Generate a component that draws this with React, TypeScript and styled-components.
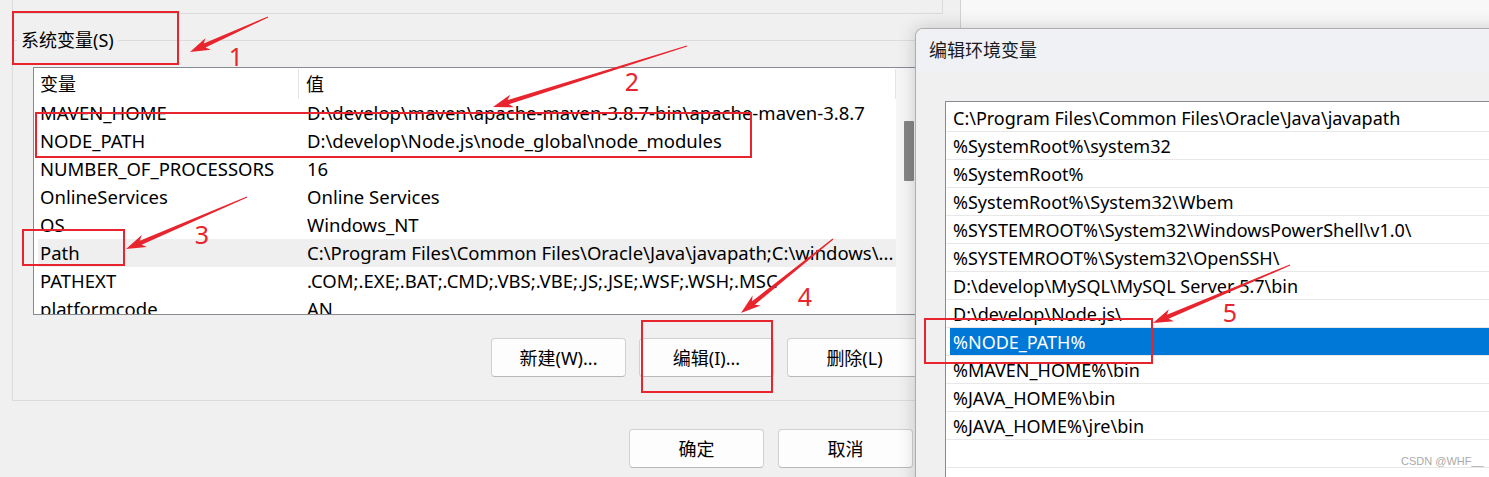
import React from "react";
import styled, { createGlobalStyle } from "styled-components";

const FONT = `"Noto Sans", "Noto Sans CJK SC", sans-serif`;
const RED = "#e8252e";

const GlobalStyle = createGlobalStyle`
  html, body { margin: 0; padding: 0; background: #f0f0f0; overflow: hidden; }
  body { font-family: ${FONT}; }
`;

const Desktop = styled.div`
  position: relative;
  display: flex;
  width: 1489px;
  height: 477px;
  overflow: hidden;
  background: #f8f8f8;
  font-family: ${FONT};
  font-size: 18px;
  color: #000;
`;

/* ---------- main (environment variables) window ---------- */
const MainWindow = styled.div`
  width: 961px;
  height: 477px;
  box-sizing: border-box;
  flex: none;
  display: flex;
  flex-direction: column;
  background: #f0f0f0;
  border-right: 1px solid #d2d2d2;
`;

const UpperGroupTail = styled.div`
  margin-left: 12px;
  width: 931px;
  height: 14px;
  box-sizing: border-box;
  border: 1px solid #dcdcdc;
  border-top: none;
`;

const GroupBox = styled.fieldset`
  margin: 14px 0 0 12px;
  width: 931px;
  box-sizing: border-box;
  border: 1px solid #dcdcdc;
  padding: 15px 20px 23px 20px;
  min-width: 0;
  display: flex;
  flex-direction: column;
`;

const GroupLegend = styled.legend`
  margin-left: -16px;
  padding: 0 4px;
  font-size: 18px;
  line-height: 24px;
`;

const ListView = styled.div`
  display: flex;
  height: 248px;
  box-sizing: border-box;
  border: 1px solid #868a91;
  background: #fff;
`;

const ListMain = styled.div`
  flex: 1;
  min-width: 0;
  display: flex;
  flex-direction: column;
  overflow: hidden;
`;

const ListHeader = styled.div`
  height: 38px;
  flex: none;
  display: flex;
  align-items: flex-start;
  padding-top: 1px;
  box-sizing: border-box;
`;

const HeaderCell = styled.div<{ $width?: number; $pad: number }>`
  ${(p) => (p.$width ? `width: ${p.$width}px; flex: none;` : `flex: 1;`)}
  height: 30px;
  box-sizing: border-box;
  padding-left: ${(p) => p.$pad}px;
  display: flex;
  align-items: center;
  border-right: 1px solid #e5e5e5;
  line-height: 1;
`;

const RowsViewport = styled.div`
  flex: 1;
  overflow: hidden;
`;

const RowsInner = styled.div`
  margin-top: -7px;
  padding-left: 4px;
`;

const VarRow = styled.div<{ $hl?: boolean }>`
  height: 28px;
  display: flex;
  align-items: center;
  background: ${(p) => (p.$hl ? "#efefef" : "transparent")};
  white-space: nowrap;
  font-size: 18.5px;
  line-height: 28px;
`;

const NameCell = styled.div`
  width: 269px;
  flex: none;
  box-sizing: border-box;
  padding-left: 2px;
`;

const ValueCell = styled.div`
  flex: 1;
  min-width: 0;
  overflow: hidden;
`;

const ScrollTrack = styled.div`
  width: 25px;
  flex: none;
  background: #f6f6f6;
  display: flex;
  flex-direction: column;
  align-items: center;
`;

const ScrollThumb = styled.div`
  margin-top: 53px;
  width: 10px;
  height: 60px;
  border-radius: 1px;
  background: #868686;
`;

const ButtonRow = styled.div<{ $gap: number; $top: number; $right?: number }>`
  display: flex;
  justify-content: flex-end;
  gap: ${(p) => p.$gap}px;
  margin-top: ${(p) => p.$top}px;
  padding-right: ${(p) => p.$right ?? 0}px;
`;

const WinButton = styled.button`
  width: 135px;
  height: 39px;
  box-sizing: border-box;
  border: 1px solid #d0d0d0;
  border-bottom-color: #b9b9b9;
  border-radius: 4px;
  background: #fdfdfd;
  font-family: ${FONT};
  font-size: 18px;
  color: #000;
  padding: 0;
  line-height: 1;
`;

/* ---------- edit dialog ---------- */
const EditDialog = styled.div`
  position: absolute;
  left: 915px;
  top: 28px;
  width: 620px;
  height: 470px;
  box-sizing: border-box;
  border: 1px solid rgba(0, 0, 0, 0.28);
  border-radius: 8px 0 0 0;
  background: #f0f0f0;
  box-shadow: 0 0 18px rgba(0, 0, 0, 0.18);
  overflow: hidden;
  display: flex;
  flex-direction: column;
`;

const TitleBar = styled.div`
  height: 43px;
  flex: none;
  background: #eff1f5;
  display: flex;
  align-items: center;
  padding-left: 13px;
  padding-bottom: 3px;
  box-sizing: border-box;
  font-size: 18px;
  color: #1a1a1a;
`;

const DialogBody = styled.div`
  padding: 29px 0 0 29px;
`;

const PathList = styled.div`
  border: 1px solid #868a91;
  border-right: none;
  background: #fff;
  padding-top: 2px;
  height: 400px;
`;

const PathRow = styled.div`
  height: 28px;
  box-sizing: border-box;
  border-bottom: 1px solid #e8e8e8;
  padding-left: 4px;
  display: flex;
`;

const PathText = styled.div<{ $selected?: boolean }>`
  flex: 1;
  display: flex;
  align-items: center;
  padding-left: 3px;
  white-space: nowrap;
  line-height: 1;
  background: ${(p) => (p.$selected ? "#0078d7" : "transparent")};
  color: ${(p) => (p.$selected ? "#fff" : "#000")};
`;

const Watermark = styled.span`
  position: absolute;
  left: 1401px;
  top: 456px;
  font-family: "Liberation Sans", sans-serif;
  font-size: 11px;
  color: #aaaaaa;
  line-height: 1;
`;

/* ---------- annotations ---------- */
const AnnotationLayer = styled.svg`
  position: absolute;
  left: 0;
  top: 0;
  pointer-events: none;
`;

const StepNumber = styled.span<{ $x: number; $y: number }>`
  position: absolute;
  left: ${(p) => p.$x}px;
  top: ${(p) => p.$y}px;
  transform: translate(-50%, -50%);
  font-family: "Noto Sans", sans-serif;
  font-size: 25px;
  line-height: 1;
  color: ${RED};
`;

function arrowPoints(x1: number, y1: number, x2: number, y2: number): string {
  const dx = x2 - x1;
  const dy = y2 - y1;
  const len = Math.hypot(dx, dy);
  const ux = dx / len;
  const uy = dy / len;
  const nx = -uy;
  const ny = ux;
  const L = 20;
  const W = 6.5;
  const w0 = 0.6;
  const w1 = 2.2;
  const hbx = x2 - ux * L;
  const hby = y2 - uy * L;
  const bx = hbx + ux * 4;
  const by = hby + uy * 4;
  const pts: [number, number][] = [
    [x1 + nx * w0, y1 + ny * w0],
    [bx + nx * w1, by + ny * w1],
    [hbx + nx * W, hby + ny * W],
    [x2, y2],
    [hbx - nx * W, hby - ny * W],
    [bx - nx * w1, by - ny * w1],
    [x1 - nx * w0, y1 - ny * w0],
  ];
  return pts.map(([a, b]) => `${a.toFixed(1)},${b.toFixed(1)}`).join(" ");
}

const vars: { name: string; value: string; hl?: boolean }[] = [
  { name: "MAVEN_HOME", value: "D:\\develop\\maven\\apache-maven-3.8.7-bin\\apache-maven-3.8.7" },
  { name: "NODE_PATH", value: "D:\\develop\\Node.js\\node_global\\node_modules" },
  { name: "NUMBER_OF_PROCESSORS", value: "16" },
  { name: "OnlineServices", value: "Online Services" },
  { name: "OS", value: "Windows_NT" },
  {
    name: "Path",
    value: "C:\\Program Files\\Common Files\\Oracle\\Java\\javapath;C:\\windows\\...",
    hl: true,
  },
  { name: "PATHEXT", value: ".COM;.EXE;.BAT;.CMD;.VBS;.VBE;.JS;.JSE;.WSF;.WSH;.MSC" },
  { name: "platformcode", value: "AN" },
];

const paths: string[] = [
  "C:\\Program Files\\Common Files\\Oracle\\Java\\javapath",
  "%SystemRoot%\\system32",
  "%SystemRoot%",
  "%SystemRoot%\\System32\\Wbem",
  "%SYSTEMROOT%\\System32\\WindowsPowerShell\\v1.0\\",
  "%SYSTEMROOT%\\System32\\OpenSSH\\",
  "D:\\develop\\MySQL\\MySQL Server 5.7\\bin",
  "D:\\develop\\Node.js\\",
  "%NODE_PATH%",
  "%MAVEN_HOME%\\bin",
  "%JAVA_HOME%\\bin",
  "%JAVA_HOME%\\jre\\bin",
  "",
  "",
];

const boxes = [
  { x: 12, y: 11, w: 167, h: 54 },
  { x: 35, y: 112, w: 717, h: 46 },
  { x: 22, y: 229, w: 103, h: 37 },
  { x: 641, y: 320, w: 132, h: 73 },
  { x: 924, y: 318, w: 229, h: 46 },
];

const arrows = [
  [268, 17, 190, 52],
  [687, 46, 493, 107],
  [247, 197, 126, 249],
  [833, 239, 741, 313],
  [1290, 265, 1153, 323],
];

const steps = [
  { n: "1", x: 236, y: 56 },
  { n: "2", x: 632, y: 81 },
  { n: "3", x: 202, y: 234 },
  { n: "4", x: 805, y: 296 },
  { n: "5", x: 1230, y: 312 },
];

export default function App() {
  return (
    <>
      <GlobalStyle />
      <Desktop>
        <MainWindow>
          <UpperGroupTail />
          <GroupBox>
            <GroupLegend>系统变量(S)</GroupLegend>
            <ListView>
              <ListMain>
                <ListHeader>
                  <HeaderCell $width={265} $pad={6}>变量</HeaderCell>
                  <HeaderCell $pad={7}>值</HeaderCell>
                </ListHeader>
                <RowsViewport>
                  <RowsInner>
                    {vars.map((v) => (
                      <VarRow key={v.name} $hl={v.hl}>
                        <NameCell>{v.name}</NameCell>
                        <ValueCell>{v.value}</ValueCell>
                      </VarRow>
                    ))}
                  </RowsInner>
                </RowsViewport>
              </ListMain>
              <ScrollTrack>
                <ScrollThumb />
              </ScrollTrack>
            </ListView>
            <ButtonRow $gap={13} $top={23}>
              <WinButton>新建(W)...</WinButton>
              <WinButton>编辑(I)...</WinButton>
              <WinButton>删除(L)</WinButton>
            </ButtonRow>
          </GroupBox>
          <ButtonRow $gap={14} $top={28} $right={47}>
            <WinButton>确定</WinButton>
            <WinButton>取消</WinButton>
          </ButtonRow>
        </MainWindow>

        <EditDialog>
          <TitleBar>编辑环境变量</TitleBar>
          <DialogBody>
            <PathList>
              {paths.map((p, i) => (
                <PathRow key={i}>
                  <PathText $selected={p === "%NODE_PATH%"}>{p}</PathText>
                </PathRow>
              ))}
            </PathList>
          </DialogBody>
        </EditDialog>

        <Watermark>CSDN @WHF__</Watermark>

        <AnnotationLayer width={1489} height={477} viewBox="0 0 1489 477">
          {boxes.map((b, i) => (
            <rect
              key={i}
              x={b.x + 1}
              y={b.y + 1}
              width={b.w - 2}
              height={b.h - 2}
              fill="none"
              stroke={RED}
              strokeWidth={2}
            />
          ))}
          {arrows.map((a, i) => (
            <polygon key={i} points={arrowPoints(a[0], a[1], a[2], a[3])} fill={RED} />
          ))}
        </AnnotationLayer>
        {steps.map((s) => (
          <StepNumber key={s.n} $x={s.x} $y={s.y}>
            {s.n}
          </StepNumber>
        ))}
      </Desktop>
    </>
  );
}
